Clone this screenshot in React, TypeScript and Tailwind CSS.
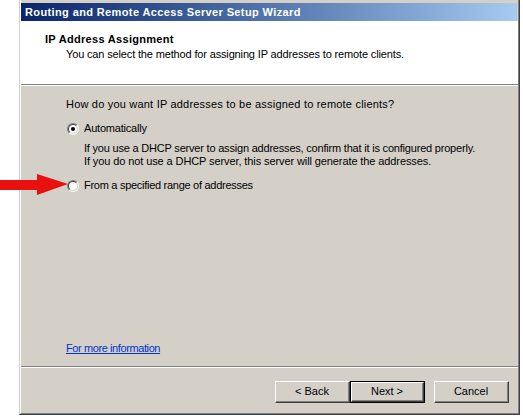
import React from 'react';

function Radio({ checked }: { checked?: boolean }) {
  return (
    <span className="flex h-[12px] w-[12px] shrink-0 items-center justify-center rounded-full border border-t-[#808080] border-l-[#808080] border-r-white border-b-white bg-[#d4d0c8]">
      <span className="flex h-[10px] w-[10px] items-center justify-center rounded-full border border-t-[#404040] border-l-[#404040] border-r-[#d4d0c8] border-b-[#d4d0c8] bg-white">
        {checked && <span className="h-[4px] w-[4px] rounded-full bg-black" />}
      </span>
    </span>
  );
}

function WizButton({ label, primary }: { label: string; primary?: boolean }) {
  if (primary) {
    return (
      <div className="shrink-0 border border-black">
        <div className="border border-t-white border-l-white border-r-[#404040] border-b-[#404040]">
          <div className="flex h-[18px] w-[71px] items-center justify-center border-r border-b border-r-[#808080] border-b-[#808080] bg-[#d4d0c8]">
            {label}
          </div>
        </div>
      </div>
    );
  }
  return (
    <div className="shrink-0 border border-t-white border-l-white border-r-[#404040] border-b-[#404040]">
      <div className="flex h-[20px] w-[73px] items-center justify-center border-r border-b border-r-[#808080] border-b-[#808080] bg-[#d4d0c8]">
        {label}
      </div>
    </div>
  );
}

export default function App() {
  return (
    <div className="relative h-[416px] w-[523px] overflow-hidden bg-white font-['Liberation_Sans',Arial,sans-serif] text-[11px] leading-[13px] text-black">
      <div className="pl-[19px]">
        <div className="h-[415px] w-[501px] border-l border-r border-b border-l-[#d4d0c8] border-r-[#404040] border-b-[#404040]">
          <div className="flex h-full flex-col border-l border-r border-b border-l-white border-r-[#808080] border-b-[#808080] bg-[#d4d0c8] pt-[3px]">
            <div className="mr-[1px] flex h-[18px] items-center bg-gradient-to-r from-[#0a246a] to-[#a6caf0] pl-[4px] font-bold tracking-[0.38px] text-white">
              Routing and Remote Access Server Setup Wizard
            </div>

            <div className="h-[64px] border-b border-[#808080] bg-white pl-[24px] pt-[12px]">
              <div className="font-bold tracking-[0.3px]">IP Address Assignment</div>
              <div className="mt-[2px] pl-[21px] tracking-[-0.15px]">You can select the method for assigning IP addresses to remote clients.</div>
            </div>
            <div className="h-[1px] bg-white" />

            <div className="flex flex-1 flex-col pl-[45px] pt-[12px]">
              <div className="tracking-[0.2px]">How do you want IP addresses to be assigned to remote clients?</div>

              <div className="mt-[11px] flex items-center gap-[5px] pl-[1px]">
                <Radio checked />
                <span className="tracking-[-0.2px]">Automatically</span>
              </div>
              <div className="mt-[7px] pl-[18px]">
                <div className="tracking-[-0.2px]">If you use a DHCP server to assign addresses, confirm that it is configured properly.</div>
                <div className="tracking-[-0.1px]">If you do not use a DHCP server, this server will generate the addresses.</div>
              </div>

              <div className="mt-[11px] flex items-center gap-[5px] pl-[1px]">
                <Radio />
                <span className="tracking-[-0.28px]">From a specified range of addresses</span>
              </div>

              <div className="mt-auto mb-[11px]">
                <a className="tracking-[-0.4px] text-[#0033cc] underline" href="#">For more information</a>
              </div>
            </div>

            <div className="h-[1px] bg-[#808080]" />
            <div className="h-[1px] bg-white" />

            <div className="flex h-[45px] items-start justify-end pr-[9px] pt-[13px]">
              <WizButton label="< Back" />
              <WizButton label="Next >" primary />
              <div className="w-[9px] shrink-0" />
              <WizButton label="Cancel" />
            </div>
          </div>
        </div>
      </div>

      <svg className="absolute left-0 top-[170px]" width="72" height="30" viewBox="0 0 72 30">
        <polygon points="0,10 37,10 37,4 68,14 37,25 37,20 0,20" fill="#e8110f" />
      </svg>
    </div>
  );
}
